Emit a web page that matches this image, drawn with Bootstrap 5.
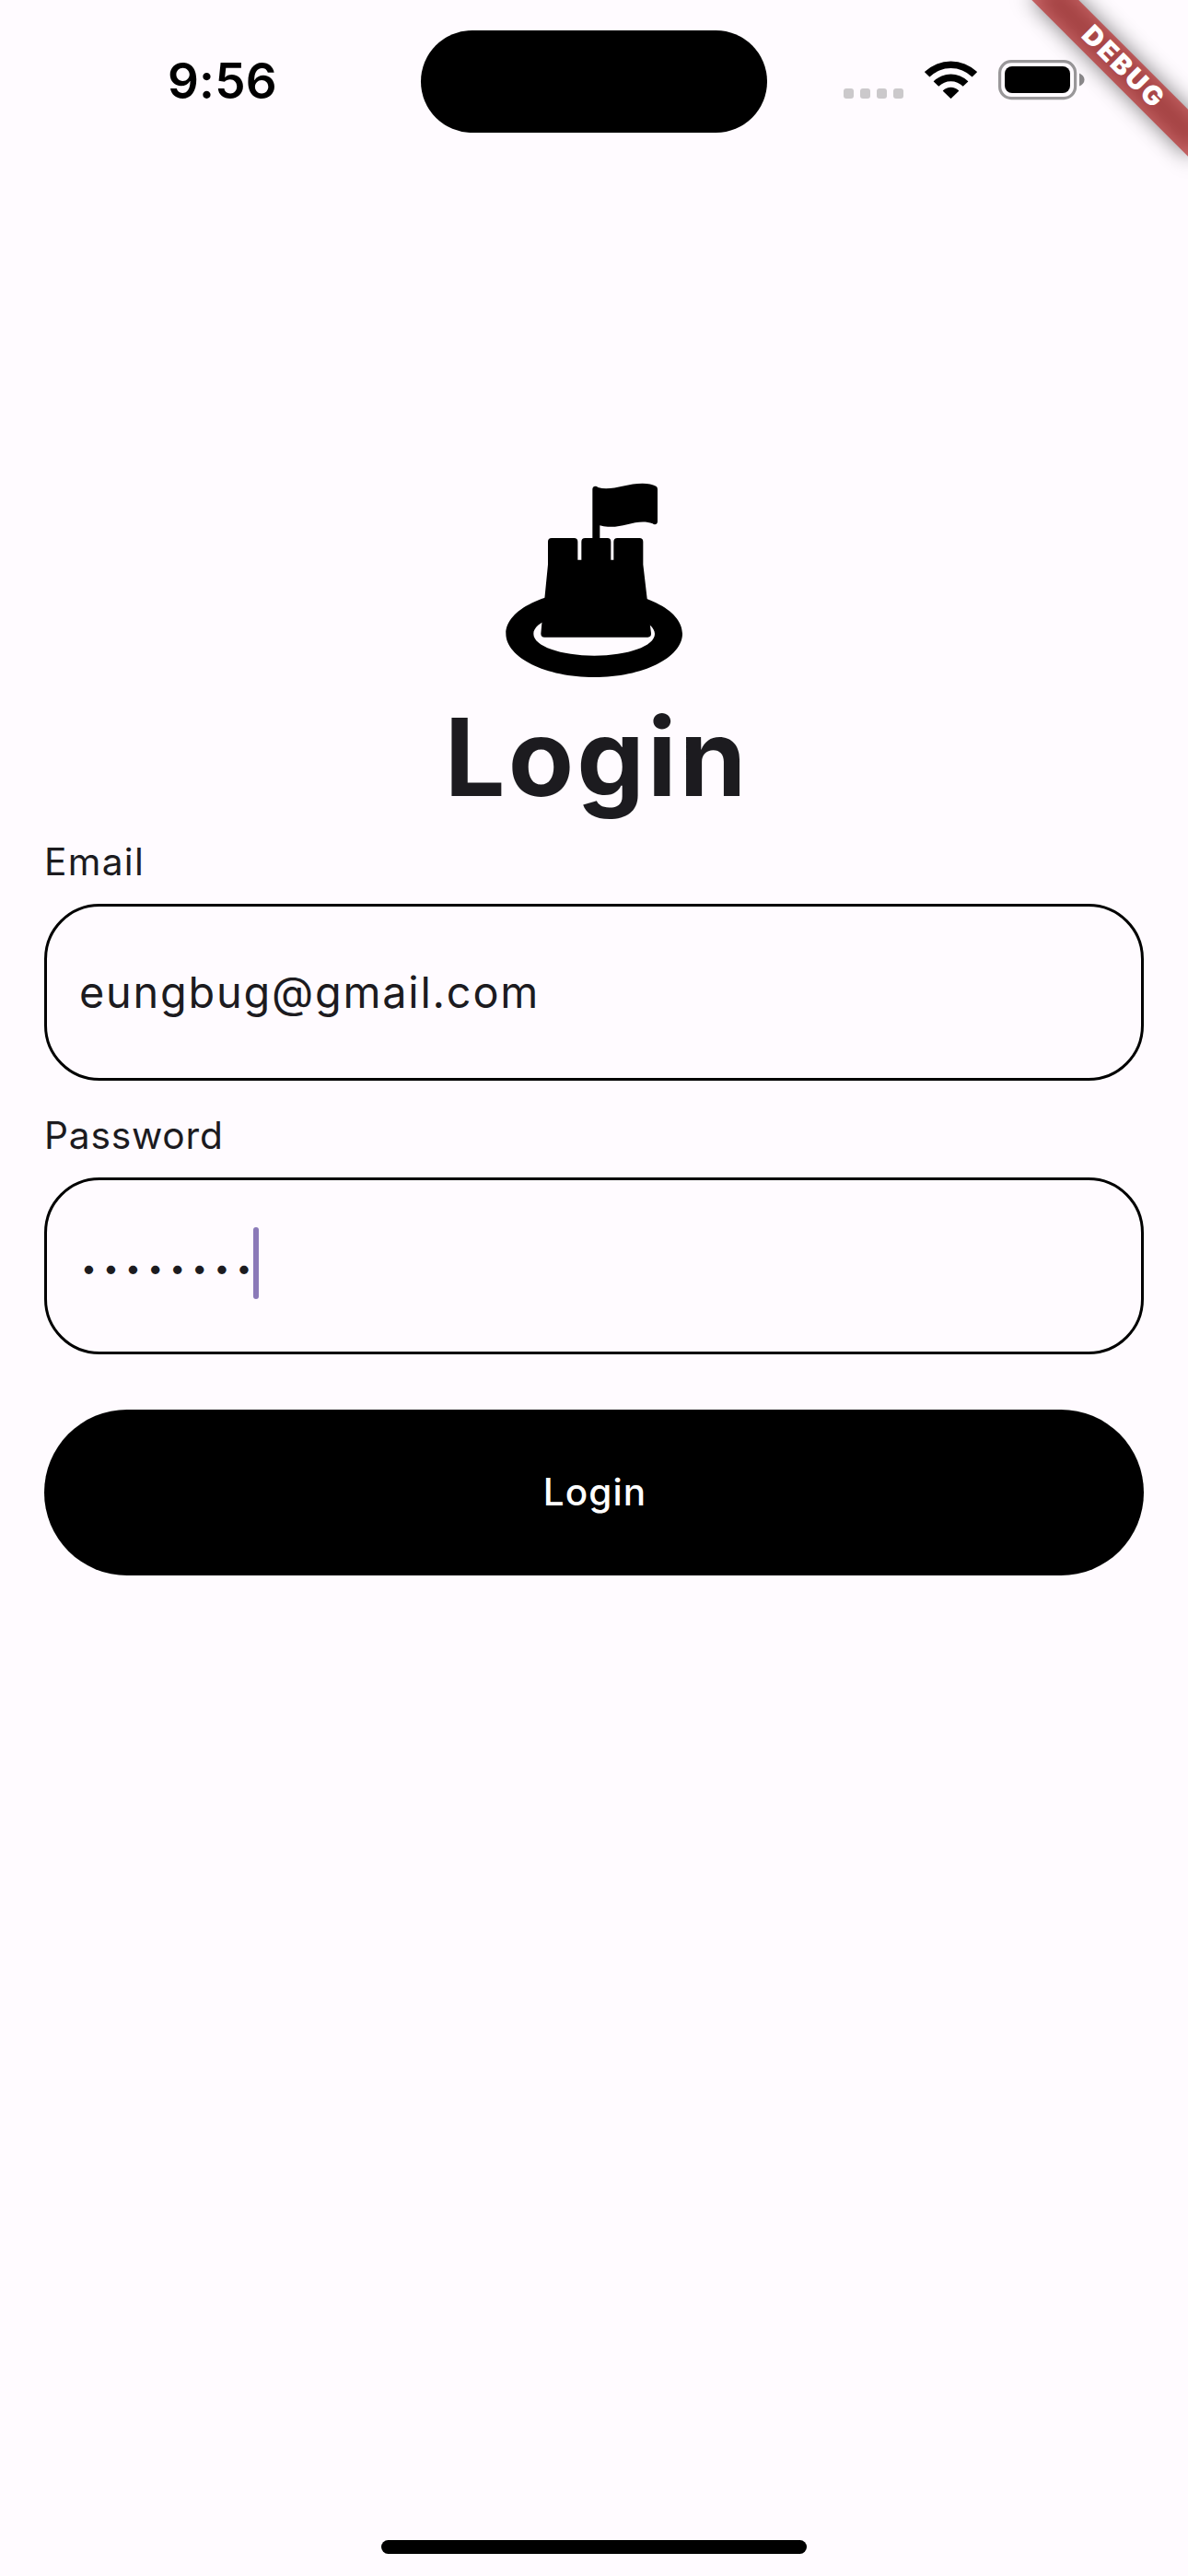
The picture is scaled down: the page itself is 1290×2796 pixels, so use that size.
<!DOCTYPE html>
<html lang="en">
<head>
<meta charset="utf-8">
<meta name="viewport" content="width=device-width, initial-scale=1">
<title>Login</title>
<link href="https://cdn.jsdelivr.net/npm/bootstrap@5.3.0/dist/css/bootstrap.min.css" rel="stylesheet">
<style>
  body { background: #fffbff; color: #1c1b1f; font-family: Inter, "Liberation Sans", sans-serif; }
  .screen { height: 2796px; }
  .status-bar { height: 177px; }
  .status-side { width: 457px; height: 177px; }
  .clock { font-size: 53px; font-weight: 600; line-height: 60px; padding: 58px 0 0 182px; color: #000; letter-spacing: .2px; }
  .island { width: 376px; height: 111px; margin-top: 33px; }
  .status-icons { padding: 65px 0 0 83px; }
  .debug-banner { width: 300px; height: 300px; pointer-events: none; }
  .login-main { padding: 347px 48px 0; }
  .castle { width: 230px; height: 240px; margin-top: -14px; }
  .title { font-size: 116.5px; line-height: 144px; font-weight: 700; letter-spacing: 3.1px; padding-left: 6px; }
  .field-label { font-size: 40.7px; line-height: 60px; margin-bottom: 15px; letter-spacing: .8px; }
  .email-label { margin-top: 12px; letter-spacing: 1.3px; }
  .pw-label { margin-top: 30px; }
  .field { height: 192px; border: 3px solid #000; border-radius: 60px; padding: 0 36px; background: transparent; color: #1c1b1f; font-size: 46.8px; }
  .field:focus { border-color: #000; box-shadow: none; background: transparent; color: #1c1b1f; }
  .email-text { letter-spacing: 1.8px; padding-left: 35px; }
  .pw-field { padding-bottom: 6px; }
  .pw-dots { font-size: 30px; line-height: 40px; letter-spacing: 7.22px; margin: 9.6px -5.6px 0 .9px; }
  .caret { width: 6px; height: 78px; border-radius: 3px; background: #8b7ab8; }
  .btn-login { height: 180px; font-size: 40.5px; font-weight: 500; letter-spacing: 1.1px; margin-top: 60px; padding-left: 14px; }
  .home-indicator { width: 462px; height: 15px; margin-bottom: 24px; }
</style>
</head>
<body>
<div class="screen d-flex flex-column position-relative overflow-hidden">
  <header class="status-bar d-flex flex-shrink-0 align-items-start">
    <div class="status-side"><div class="clock">9:56</div></div>
    <div class="island bg-black rounded-pill flex-shrink-0"></div>
    <div class="status-side status-icons">
      <svg class="d-block" width="262" height="44" viewBox="0 0 262 44" aria-hidden="true">
        <g fill="#cbc9cb">
          <rect x="0" y="31" width="11" height="11" rx="3"/><rect x="18" y="31" width="11" height="11" rx="3"/>
          <rect x="36" y="31" width="11" height="11" rx="3"/><rect x="54" y="31" width="11" height="11" rx="3"/>
        </g>
        <g>
          <path d="M88.2 12.8A41 41 0 0 1 144.8 12.8L145 13.2 139.6 18.5A33 33 0 0 0 93.4 18.5L88 13.2Z"/>
          <path d="M98 23A26.5 26.5 0 0 1 135 23L135.3 23.5 129.7 28.7A19 19 0 0 0 103.3 28.7L97.7 23.5Z"/>
          <path d="M108 33.3A12 12 0 0 1 125 33.3L125.2 33.7 116.9 41.8Q116.5 42.1 116.1 41.8L107.8 33.7Z"/>
        </g>
        <rect x="169.6" y="1.6" width="82" height="40" rx="12.5" fill="none" stroke="#999799" stroke-width="3.2"/>
        <rect x="175" y="7" width="71" height="29" rx="8"/>
        <path d="M256 14.5Q261.5 17 261.5 21.5T256 28.5Z" fill="#8a888a"/>
      </svg>
    </div>
  </header>

  <main class="login-main flex-grow-1 d-flex flex-column">
    <svg class="castle align-self-center flex-shrink-0" viewBox="0 0 690 720" aria-hidden="true">
      <path fill-rule="evenodd" d="M346 392C504 392 633 455 633 533S504 675 346 675 58 611 58 533 188 392 346 392ZM346 462C237 462 148 494 148 534S237 605 346 605 543 574 543 534 455 462 346 462Z"/>
      <path d="M340 222V62Q341 53 350 53 354 53 358 57C400 70 450 44 503 44Q530 44 547 53 552 56 552 63V168Q552 177 543 178 539 178 536 175C490 156 440 190 390 185Q376 185 364 181V222H389Q400 222 400 234V293H409V234Q409 222 421 222H493Q505 222 505 234V308L518 419 527 500 531 532Q532 545 520 545H184Q172 545 172 533L175 500 184 419 195 308V234Q195 222 207 222H280Q292 222 292 234V293H304V234Q304 222 316 222Z"/>
    </svg>
    <h1 class="title text-center mb-0">Login</h1>
    <form class="d-flex flex-column">
      <label class="field-label email-label" for="email">Email</label>
      <input id="email" class="field email-text form-control" type="text" value="eungbug@gmail.com">
      <label class="field-label pw-label">Password</label>
      <div class="field pw-field form-control d-flex align-items-center"><span class="pw-dots">••••••••</span><span class="caret"></span></div>
      <button class="btn-login btn btn-dark bg-black border-0 rounded-pill w-100" type="button">Login</button>
    </form>
  </main>

  <footer class="d-flex justify-content-center"><div class="home-indicator bg-black rounded-pill"></div></footer>

  <svg class="debug-banner position-absolute top-0 end-0" viewBox="0 0 300 300">
    <defs><filter id="soft" x="-50%" y="-200%" width="200%" height="500%"><feGaussianBlur stdDeviation="11.9"/></filter></defs>
    <g transform="translate(300 0) rotate(45)">
      <rect x="-120" y="84" width="240" height="36" fill="#000" fill-opacity=".5" filter="url(#soft)"/>
      <rect x="-120" y="84" width="240" height="36" fill="#b71c1c" fill-opacity=".627"/>
      <text x="1" y="110.8" text-anchor="middle" fill="#fff" font-size="29" font-weight="900" textLength="111">DEBUG</text>
    </g>
  </svg>
</div>
<script src="https://cdn.jsdelivr.net/npm/bootstrap@5.3.0/dist/js/bootstrap.bundle.min.js"></script>
</body>
</html>
